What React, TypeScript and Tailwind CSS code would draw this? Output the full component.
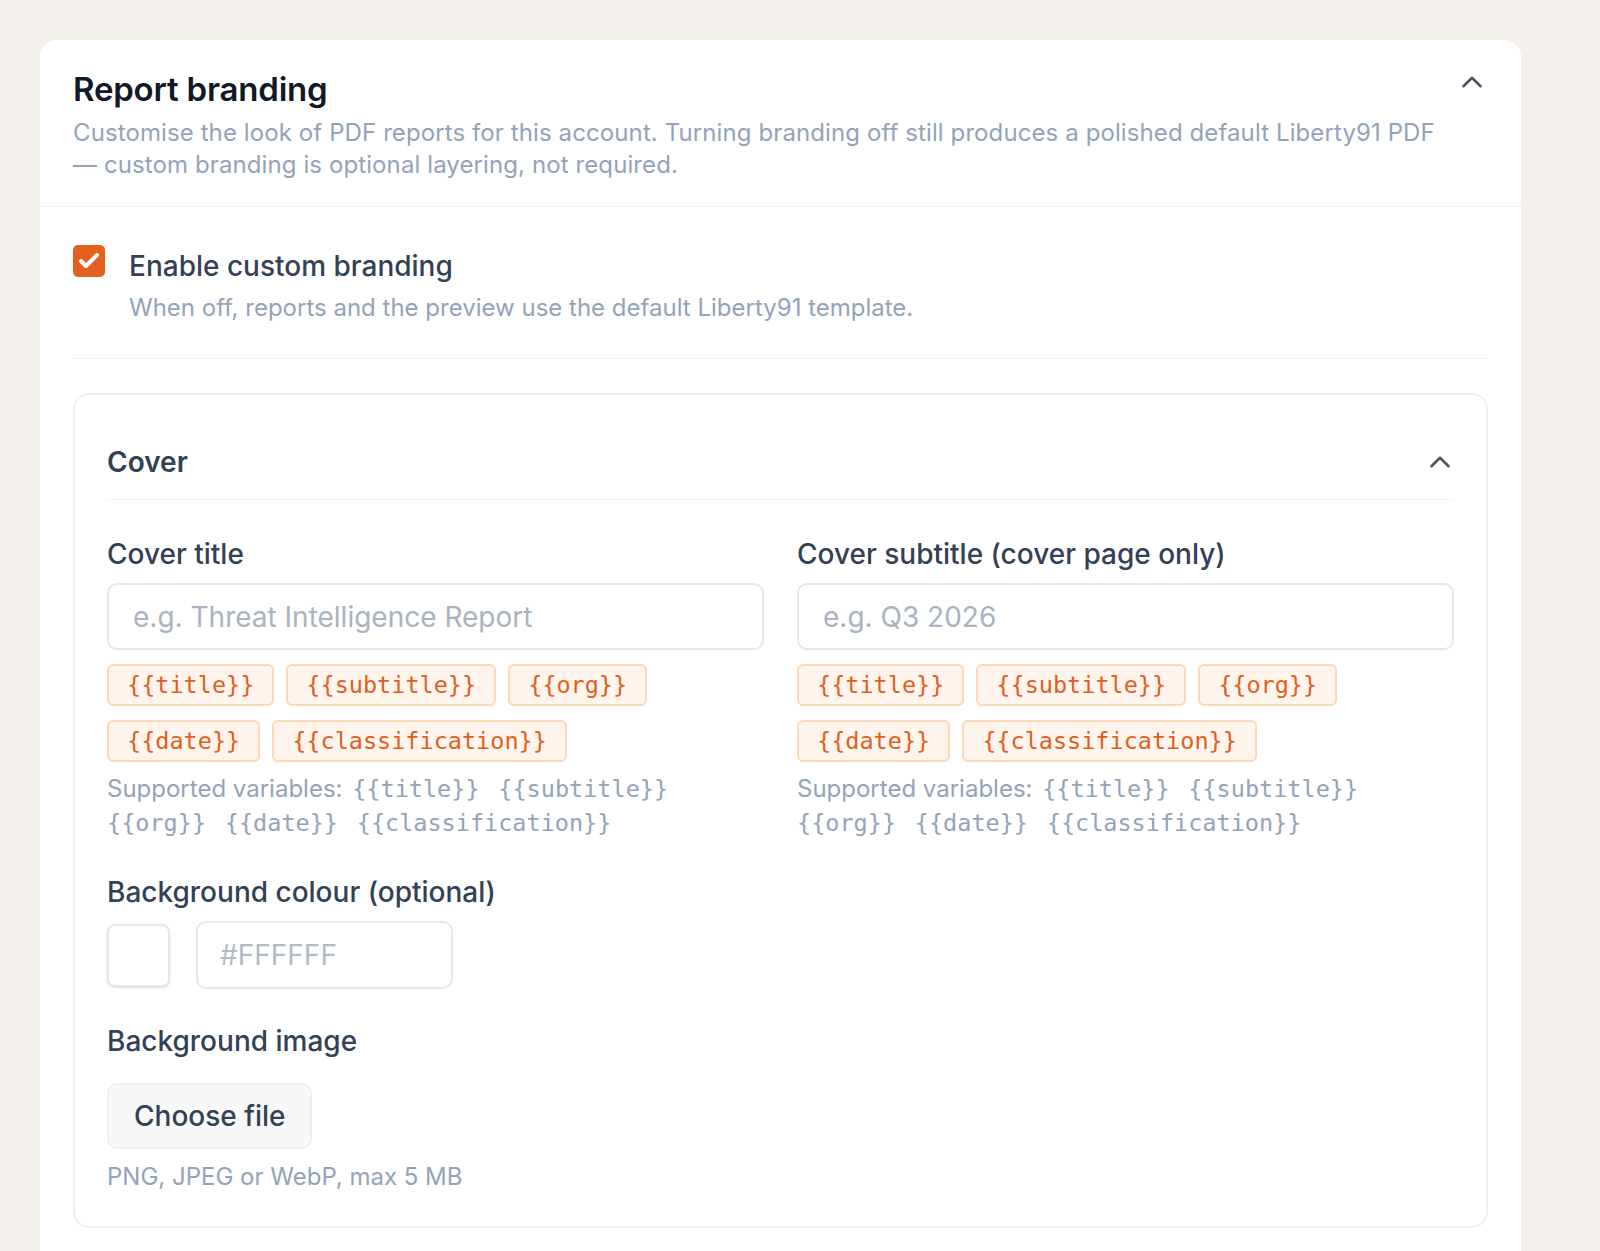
import React from 'react';
import { ChevronUp, Check } from 'lucide-react';

const VARS = ['{{title}}', '{{subtitle}}', '{{org}}', '{{date}}', '{{classification}}'];

const mono = 'font-["DejaVu_Sans_Mono","Liberation_Mono",monospace]';

function VariableField({ label, placeholder }: { label: string; placeholder: string }) {
  return (
    <div className="flex flex-col">
      <label className="text-[28px] leading-[34px] font-medium text-[#334155]">{label}</label>
      <input
        className="mt-[12px] h-[67px] w-full rounded-[10px] border-2 border-[#e6e7ea] bg-white px-[24px] text-[28px] text-[#334155] placeholder:text-[#aab3c0] outline-none"
        placeholder={placeholder}
      />
      <div className="mt-[14px] flex flex-wrap gap-x-[12px] gap-y-[14px]">
        {VARS.map((v) => (
          <button
            key={v}
            className={`${mono} h-[42px] rounded-[6px] border-2 border-[#fdd8b5] bg-[#fff5ed] px-[18px] text-[23.5px] leading-[28px] text-[#df5f1d]`}
          >
            {v}
          </button>
        ))}
      </div>
      <p className="mt-[10px] text-[24px] leading-[33px] text-[#94a3b8]">
        Supported variables:
        {VARS.map((v, i) => (
          <React.Fragment key={v}>
            {' '}
            <code className={`${mono} ${i === 0 ? 'ml-[3px]' : ''} mr-[12px] text-[23.5px] text-[#94a3b8]`}>{v}</code>
          </React.Fragment>
        ))}
      </p>
    </div>
  );
}

export default function App() {
  return (
    <div className="min-h-screen bg-[#f4f0ec] pt-[40px] pl-[40px] font-['Inter',sans-serif]">
      <div className="w-[1481px] rounded-t-[16px] bg-white pb-[26px]">
        <div className="flex items-start justify-between gap-[4px] border-b border-[#f2f2f2] pt-[31px] pb-[25px] pl-[33px] pr-[32px]">
          <div className="min-w-0 flex-1">
            <h2 className="text-[33px] leading-[36px] font-semibold tracking-[-0.2px] text-[#111827]">Report branding</h2>
            <p className="mt-[10px] text-[24px] leading-[32px] tracking-[0.1px] text-[#94a3b8]">
              Customise the look of PDF reports for this account. Turning branding off still produces a polished default Liberty91 PDF — custom branding is optional layering, not required.
            </p>
          </div>
          <ChevronUp className="mt-[-6px] h-[34px] w-[34px] shrink-0 text-[#475569]" strokeWidth={1.8} />
        </div>

        <div className="px-[33px] pt-[42px]">
          <div className="flex items-start gap-[24px] border-b border-[#f2f2f2] pb-[34px]">
            <div className="mt-[-4px] flex h-[32px] w-[32px] shrink-0 items-center justify-center rounded-[5px] bg-[#e2611f]">
              <Check className="h-[24px] w-[24px] text-white" strokeWidth={4} />
            </div>
            <div>
              <div className="text-[28px] leading-[34px] font-medium text-[#334155]">Enable custom branding</div>
              <div className="mt-[9px] text-[24px] leading-[32px] text-[#94a3b8]">
                When off, reports and the preview use the default Liberty91 template.
              </div>
            </div>
          </div>

          <div className="mt-[34px] rounded-[16px] border-2 border-[#efefef] px-[32px] pt-[49px] pb-[33px]">
            <div className="flex items-center justify-between border-b border-[#f2f2f2] pb-[19px]">
              <h3 className="text-[28px] leading-[36px] font-semibold text-[#334155]">Cover</h3>
              <ChevronUp className="mr-[-3px] h-[34px] w-[34px] text-[#475569]" strokeWidth={1.8} />
            </div>

            <div className="mt-[37px] grid grid-cols-2 gap-x-[33px]">
              <VariableField label="Cover title" placeholder="e.g. Threat Intelligence Report" />
              <VariableField label="Cover subtitle (cover page only)" placeholder="e.g. Q3 2026" />
            </div>

            <div className="mt-[35px]">
              <label className="text-[28px] leading-[34px] font-medium text-[#334155]">Background colour (optional)</label>
              <div className="mt-[12px] flex items-center gap-[26px]">
                <div className="h-[63px] w-[63px] rounded-[8px] border-2 border-[#e9e7e6] bg-white shadow-sm" />
                <input
                  className="h-[68px] w-[257px] rounded-[10px] border-2 border-[#e6e7ea] px-[22px] text-[28px] text-[#334155] placeholder:text-[#b3bbc6] outline-none"
                  placeholder="#FFFFFF"
                />
              </div>
            </div>

            <div className="mt-[35px]">
              <label className="text-[28px] leading-[34px] font-medium text-[#334155]">Background image</label>
              <div className="mt-[25px]">
                <button className="h-[66px] rounded-[10px] border-2 border-[#efefef] bg-[#f8f8f8] px-[25px] text-[28px] font-medium text-[#334155]">
                  Choose file
                </button>
              </div>
              <p className="mt-[12px] text-[24px] leading-[32px] text-[#94a3b8]">PNG, JPEG or WebP, max 5 MB</p>
            </div>
          </div>
        </div>
      </div>
    </div>
  );
}
